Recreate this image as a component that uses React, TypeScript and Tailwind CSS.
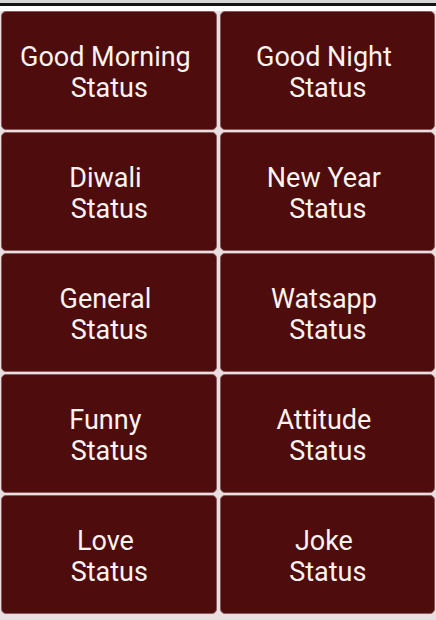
import React from 'react';

const items = [
  ['Good Morning', 'Status'],
  ['Good Night', 'Status'],
  ['Diwali', 'Status'],
  ['New Year', 'Status'],
  ['General', 'Status'],
  ['Watsapp', 'Status'],
  ['Funny', 'Status'],
  ['Attitude', 'Status'],
  ['Love', 'Status'],
  ['Joke', 'Status'],
];

export default function App() {
  return (
    <div className="w-[436px] h-[620px] bg-[#e9dfe1] overflow-hidden" style={{ fontFamily: 'Roboto, "Noto Sans", sans-serif' }}>
      <div className="h-[3px] bg-[#d6d6d6]" />
      <div className="h-[3px] bg-[#141414]" />
      <div className="h-[5px] bg-white" />
      <div className="grid grid-cols-2 gap-x-[3px] gap-y-[2px] px-[1px]">
        {items.map(([a, b], i) => (
          <div
            key={i}
            className="h-[119px] rounded-[5px] bg-[#4f0c0d] border border-[#8a5a5c] flex flex-col items-center justify-center pt-[5px] text-[#fbf3ef] text-[27px] leading-[31px] whitespace-pre text-center"
          >
            <span>{a + ' '}</span>
            <span className="pl-[1px]">{b}</span>
          </div>
        ))}
      </div>
    </div>
  );
}
